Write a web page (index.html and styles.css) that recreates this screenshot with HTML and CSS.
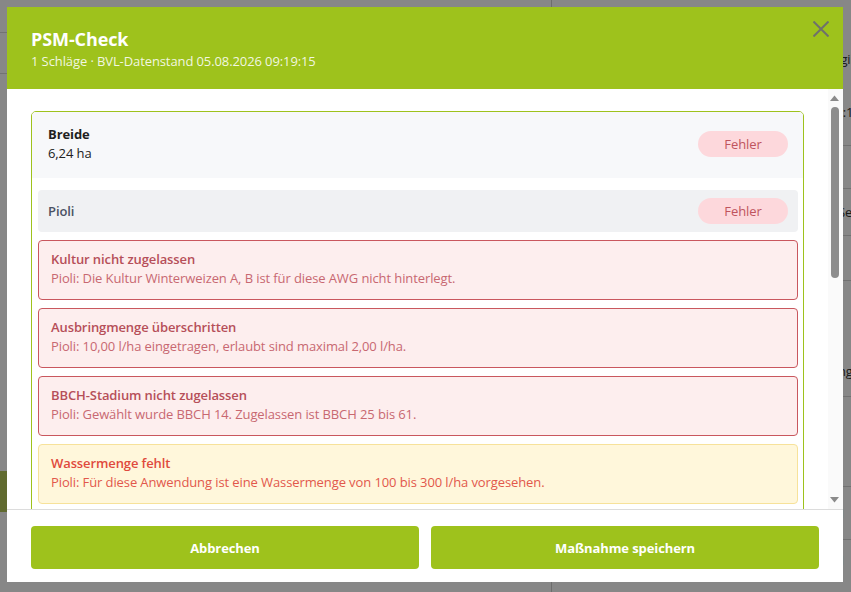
FILE: index.html
```html
<!DOCTYPE html>
<html lang="de">
<head>
<meta charset="utf-8">
<title>PSM-Check</title>
<link rel="stylesheet" href="styles.css">
</head>
<body>
<div class="page">
  <main class="app-main">
    <div class="app-top"></div>
    <div class="app-row"></div>
    <div class="app-spacer"></div>
    <div class="app-action"></div>
  </main>
  <aside class="app-side">
    <div class="side-row side-row--head">
      <span class="side-text side-text--a">Logik</span>
      <span class="side-text side-text--b">09:15</span>
    </div>
    <div class="side-row side-row--h43"></div>
    <div class="side-row side-row--h47"><span class="side-text">Serie</span></div>
    <div class="side-row side-row--h45"></div>
    <div class="side-row side-row--h116"><span class="side-text">ngen</span></div>
    <div class="side-row side-row--h90"></div>
    <div class="side-row side-row--h53"><span class="side-text">1</span></div>
    <div class="side-row side-row--last"><span class="side-text">1</span></div>
  </aside>
</div>

<div class="backdrop"></div>

<section class="modal" role="dialog" aria-labelledby="psm-title">
  <header class="modal-head">
    <h1 id="psm-title" class="modal-title">PSM-Check</h1>
    <p class="modal-sub">1 Schläge · BVL-Datenstand 05.08.2026 09:19:15</p>
    <button class="modal-close" type="button" aria-label="Schließen">
      <svg width="16" height="16" viewBox="0 0 16 16" aria-hidden="true">
        <path d="M0.5 0.5 L15.5 15.5 M15.5 0.5 L0.5 15.5" stroke="currentColor" stroke-width="2" fill="none"/>
      </svg>
    </button>
  </header>

  <div class="modal-main">
    <div class="modal-body">
      <article class="field-card">
        <div class="field-head">
          <div class="field-info">
            <div class="field-name">Breide</div>
            <div class="field-area">6,24 ha</div>
          </div>
          <span class="badge badge--error">Fehler</span>
        </div>

        <div class="field-body">
          <div class="product-row">
            <span class="product-name">Pioli</span>
            <span class="badge badge--error">Fehler</span>
          </div>

          <div class="issue issue--error">
            <div class="issue-title">Kultur nicht zugelassen</div>
            <div class="issue-text">Pioli: Die Kultur Winterweizen A, B ist für diese AWG nicht hinterlegt.</div>
          </div>
          <div class="issue issue--error">
            <div class="issue-title">Ausbringmenge überschritten</div>
            <div class="issue-text">Pioli: 10,00 l/ha eingetragen, erlaubt sind maximal 2,00 l/ha.</div>
          </div>
          <div class="issue issue--error">
            <div class="issue-title">BBCH-Stadium nicht zugelassen</div>
            <div class="issue-text">Pioli: Gewählt wurde BBCH 14. Zugelassen ist BBCH 25 bis 61.</div>
          </div>
          <div class="issue issue--warn">
            <div class="issue-title">Wassermenge fehlt</div>
            <div class="issue-text">Pioli: Für diese Anwendung ist eine Wassermenge von 100 bis 300 l/ha vorgesehen.</div>
          </div>
          <div class="issue issue--warn">
            <div class="issue-title">Abstandsauflage beachten</div>
            <div class="issue-text">Pioli: NW605 – Mindestabstand zu Oberflächengewässern 5 m.</div>
          </div>
          <div class="issue issue--warn">
            <div class="issue-title">Anwendungen pro Jahr</div>
            <div class="issue-text">Pioli: Maximal 1 Anwendung je Kultur und Jahr zulässig.</div>
          </div>

          <div class="product-row">
            <span class="product-name">Input Triple</span>
            <span class="badge badge--error">Fehler</span>
          </div>
          <div class="issue issue--error">
            <div class="issue-title">Ausbringmenge überschritten</div>
            <div class="issue-text">Input Triple: 2,50 l/ha eingetragen, erlaubt sind maximal 1,25 l/ha.</div>
          </div>
          <div class="issue issue--warn">
            <div class="issue-title">Wassermenge fehlt</div>
            <div class="issue-text">Input Triple: Für diese Anwendung ist eine Wassermenge von 100 bis 300 l/ha vorgesehen.</div>
          </div>
        </div>
      </article>
    </div>

    <div class="scrollbar" aria-hidden="true">
      <div class="scroll-btn">
        <svg width="9" height="6" viewBox="0 0 9 6"><path d="M0 6 L4.5 0.5 L9 6 Z" fill="#8a8a8a"/></svg>
      </div>
      <div class="scroll-track">
        <div class="scroll-thumb"></div>
      </div>
      <div class="scroll-btn scroll-btn--down">
        <svg width="9" height="6" viewBox="0 0 9 6"><path d="M0 0 L4.5 5.5 L9 0 Z" fill="#8a8a8a"/></svg>
      </div>
    </div>
  </div>

  <footer class="modal-foot">
    <button class="btn" type="button">Abbrechen</button>
    <button class="btn" type="button">Maßnahme speichern</button>
  </footer>
</section>
</body>
</html>
```

FILE: styles.css
```css
* {
  box-sizing: border-box;
}

html, body {
  margin: 0;
  height: 100%;
}

body {
  font-family: "Open Sans", "Noto Sans", sans-serif;
  font-size: 13px;
  letter-spacing: -0.1px;
  color: #222;
  background: #fff;
  overflow: hidden;
}

/* ---- application behind the dialog ---- */
.page {
  display: grid;
  grid-template-columns: 551px 1fr;
  height: 100vh;
}

.app-main {
  display: flex;
  flex-direction: column;
}

.app-top {
  height: 33px;
  border-bottom: 1px solid #d8d8d8;
}

.app-row {
  height: 41px;
  border-bottom: 1px solid #d8d8d8;
}

.app-spacer {
  height: 397px;
}

.app-action {
  width: 120px;
  height: 41px;
  background: #b5c95a;
}

.app-side {
  border-left: 1px solid #cfcfcf;
  display: flex;
  flex-direction: column;
}

.side-row {
  border-bottom: 1px solid #d6d6d6;
  padding-left: 286px;
  white-space: nowrap;
  display: flex;
  align-items: center;
  color: #333;
}

.side-row--head {
  height: 146px;
  flex-direction: column;
  align-items: flex-start;
  justify-content: flex-start;
  padding-top: 50px;
  gap: 35px;
}

.side-row--h43 { height: 43px; }
.side-row--h47 { height: 47px; }
.side-row--h45 { height: 45px; }
.side-row--h116 { height: 116px; align-items: flex-end; padding-bottom: 16px; }
.side-row--h90 { height: 90px; }
.side-row--h53 { height: 53px; }
.side-row--last { height: 40px; border-bottom: 0; }

.side-text--a { margin-left: -12px; }
.side-text--b { margin-left: -10px; }

.backdrop {
  position: fixed;
  inset: 0;
  background: rgba(0, 0, 0, 0.47);
}

/* ---- dialog ---- */
.modal {
  position: fixed;
  left: 7px;
  top: 7px;
  width: 836px;
  height: 575px;
  background: #fff;
  display: flex;
  flex-direction: column;
}

.modal-head {
  position: relative;
  flex: 0 0 82px;
  background: #9ec21c;
  padding: 20px 24px 0;
  color: #fff;
}

.modal-title {
  margin: 0;
  font-size: 18px;
  line-height: 24px;
  font-weight: 700;
}

.modal-sub {
  margin: 1px 0 0;
  font-size: 13px;
  line-height: 18px;
  font-weight: 400;
  color: rgba(255, 255, 255, 0.88);
}

.modal-close {
  position: absolute;
  top: 14px;
  right: 14px;
  width: 16px;
  height: 16px;
  padding: 0;
  border: 0;
  background: none;
  color: #6f716c;
  display: block;
}

.modal-close svg {
  display: block;
}

.modal-main {
  flex: 1 1 auto;
  min-height: 0;
  display: flex;
}

.modal-body {
  flex: 1 1 auto;
  min-width: 0;
  overflow: hidden;
  padding: 22px 24px;
}

.scrollbar {
  flex: 0 0 15px;
  display: flex;
  flex-direction: column;
  background: #fafafa;
}

.scroll-btn {
  height: 16px;
  display: flex;
  justify-content: center;
  padding: 6px 2px 0 0;
}

.scroll-btn svg {
  display: block;
}

.scroll-btn--down {
  padding-top: 4px;
}

.scroll-track {
  flex: 1 1 auto;
  padding: 2px 4px 0 3px;
}

.scroll-thumb {
  height: 171px;
  border-radius: 4px;
  background: #8d8d8d;
}

.field-card {
  border: 1px solid #9ec21c;
  border-radius: 5px;
  overflow: hidden;
}

.field-head {
  display: flex;
  justify-content: space-between;
  align-items: center;
  background: #f7f8fa;
  padding: 13px 15px 15px 16px;
}

.field-name {
  font-weight: 700;
  line-height: 19px;
  color: #1f1f1f;
}

.field-area {
  line-height: 19px;
  color: #222;
}

.badge {
  display: inline-flex;
  align-items: center;
  justify-content: center;
  width: 90px;
  height: 26px;
  border-radius: 13px;
  font-size: 13px;
}

.badge--error {
  background: #fdd8dc;
  color: #bf545e;
}

.field-body {
  display: flex;
  flex-direction: column;
  gap: 8px;
  padding: 12px 5px 8px 6px;
}

.product-row {
  display: flex;
  justify-content: space-between;
  align-items: center;
  height: 42px;
  padding: 0 10px;
  background: #f0f1f3;
  border-radius: 4px;
}

.product-name {
  font-weight: 600;
  color: #4a5263;
}

.issue {
  flex: 0 0 auto;
  border: 1px solid;
  border-radius: 4px;
  padding: 9px 12px 11px;
  line-height: 19px;
}

.issue-title {
  font-weight: 600;
}

.issue--error {
  background: #fdeeee;
  border-color: #c9575e;
}

.issue--error .issue-title {
  color: #b64f59;
}

.issue--error .issue-text {
  color: #c86871;
}

.issue--warn {
  background: #fff7db;
  border-color: #f7e29a;
}

.issue--warn .issue-title {
  color: #df4a3d;
}

.issue--warn .issue-text {
  color: #e2584b;
}

.modal-foot {
  flex: 0 0 auto;
  border-top: 1px solid #dcdcdc;
  padding: 16px 24px 13px;
  display: grid;
  grid-template-columns: 1fr 1fr;
  gap: 12px;
}

.btn {
  height: 43px;
  border: 0;
  border-radius: 4px;
  background: #9ec21c;
  color: #fff;
  font-family: inherit;
  font-size: 13px;
  font-weight: 700;
  letter-spacing: -0.1px;
}
```
